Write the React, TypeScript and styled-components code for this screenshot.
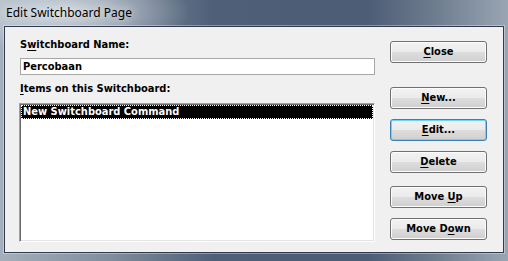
import React from 'react';
import styled, { createGlobalStyle } from 'styled-components';

const GlobalStyle = createGlobalStyle`
  html, body {
    margin: 0;
    padding: 0;
    background: #4f5f78;
  }
`;

const uiFont = `"DejaVu Sans Condensed", "Liberation Sans", sans-serif`;

const buttons = [
  { key: 'new', before: '', hot: 'N', after: 'ew...', gap: 24 },
  { key: 'edit', before: '', hot: 'E', after: 'dit...', gap: 10, focused: true },
  { key: 'delete', before: '', hot: 'D', after: 'elete', gap: 10 },
  { key: 'up', before: 'Move ', hot: 'U', after: 'p', gap: 13 },
  { key: 'down', before: 'Move D', hot: 'o', after: 'wn', gap: 10 },
];

const Frame = styled.div`
  width: 508px;
  height: 261px;
  display: flex;
  flex-direction: column;
  overflow: hidden;
  background:
    radial-gradient(ellipse 130px 40px at 60px 12px, rgba(220, 226, 232, 0.85), rgba(220, 226, 232, 0) 100%),
    linear-gradient(90deg, #a4afbb 0%, #7f8c9c 22%, #4f5f78 42%, #4c5c75 72%, #6f7d90 86%, #99a5b2 100%);
`;

const TitleBar = styled.div`
  height: 26px;
  display: flex;
  align-items: center;
  padding: 0 0 1px 6px;
  box-sizing: border-box;
  font-family: "Noto Sans", "Liberation Sans", sans-serif;
  font-size: 12px;
  color: #000;
  text-shadow: 0 0 8px rgba(255, 255, 255, 0.9);
`;

const Client = styled.div`
  margin-left: 4px;
  width: 500px;
  height: 227px;
  box-sizing: border-box;
  border: 1px solid #2f3b4c;
  box-shadow: 0 0 0 1px rgba(255, 255, 255, 0.35);
  background: #f0f0f0;
  display: flex;
  font-family: ${uiFont};
  font-size: 11px;
  font-weight: bold;
  color: #000;
`;

const LeftColumn = styled.div`
  width: 355px;
  padding: 11px 0 0 15px;
  display: flex;
  flex-direction: column;
`;

const Label = styled.div<{ $gap: number }>`
  height: 14px;
  line-height: 14px;
  margin-top: ${p => p.$gap}px;
  white-space: nowrap;
`;

const Hot = styled.span`
  text-decoration: underline;
  text-underline-offset: 2px;
`;

const NameField = styled.div`
  margin-top: 6px;
  height: 17px;
  box-sizing: border-box;
  border: 1px solid #a7a7a7;
  background: #fff;
  padding-left: 2px;
  line-height: 15px;
`;

const ListBox = styled.div`
  margin-top: 7px;
  margin-left: -1px;
  width: 356px;
  height: 139px;
  box-sizing: border-box;
  background: #fff;
  border: 1px solid;
  border-color: #a0a0a0 #fff #fff #a0a0a0;
  box-shadow: inset 1px 1px 0 #696969, inset -1px -1px 0 #e3e3e3;
  padding: 1px;
`;

const ListItem = styled.div<{ $selected?: boolean }>`
  height: 14px;
  box-sizing: border-box;
  line-height: 12px;
  padding-left: 1px;
  white-space: nowrap;
  background: ${p => (p.$selected ? '#000' : 'transparent')};
  color: ${p => (p.$selected ? '#fff' : '#000')};
  border: 1px dotted ${p => (p.$selected ? '#fff' : 'transparent')};
`;

const ButtonColumn = styled.div`
  margin-left: 15px;
  padding-top: 14px;
  display: flex;
  flex-direction: column;
`;

const Button = styled.div<{ $gap: number; $focused?: boolean }>`
  width: 97px;
  height: 22px;
  margin-top: ${p => p.$gap}px;
  box-sizing: border-box;
  border: 1px solid ${p => (p.$focused ? '#3c7fb1' : '#707070')};
  border-radius: 3px;
  background: linear-gradient(#f2f2f2 0%, #ebebeb 48%, #dddddd 52%, #cfcfcf 100%);
  box-shadow: inset 0 0 0 1px ${p => (p.$focused ? '#69d6f8' : '#fcfcfc')};
  display: flex;
  align-items: center;
  justify-content: center;
  padding-bottom: 1px;
`;

const Caption = styled.span`
  white-space: pre;
`;

export default function App() {
  return (
    <>
      <GlobalStyle />
      <Frame>
        <TitleBar>Edit Switchboard Page</TitleBar>
        <Client>
          <LeftColumn>
            <Label $gap={0}>
              S<Hot>w</Hot>itchboard Name:
            </Label>
            <NameField>Percobaan</NameField>
            <Label $gap={7}>
              <Hot>I</Hot>tems on this Switchboard:
            </Label>
            <ListBox>
              <ListItem $selected>New Switchboard Command</ListItem>
            </ListBox>
          </LeftColumn>
          <ButtonColumn>
            <Button $gap={0}>
              <Caption>
                <Hot>C</Hot>lose
              </Caption>
            </Button>
            {buttons.map(b => (
              <Button key={b.key} $gap={b.gap} $focused={b.focused}>
                <Caption>
                  {b.before}
                  <Hot>{b.hot}</Hot>
                  {b.after}
                </Caption>
              </Button>
            ))}
          </ButtonColumn>
        </Client>
      </Frame>
    </>
  );
}
